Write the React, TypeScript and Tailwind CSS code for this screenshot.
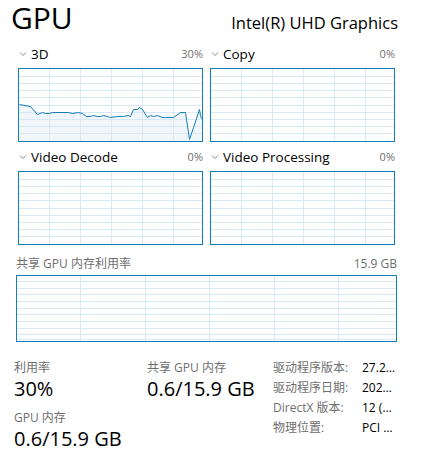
import { ReactNode } from 'react';

// interior coords of the 3D graph (183 x 72)
const load3d: [number, number][] = [
  [0, 35], [11, 37], [18, 45], [23, 43], [26, 44], [30, 44], [33, 43], [49, 43], [53, 44],
  [59, 43], [63, 44], [67, 47], [71, 47], [74, 46], [78, 47], [81, 47], [84, 46], [88, 47],
  [91, 48], [98, 47], [103, 47], [109, 46], [111, 47], [114, 40], [118, 40], [120, 38],
  [123, 40], [128, 48], [131, 46], [134, 47], [138, 46], [143, 48], [146, 48], [154, 48],
  [161, 43], [166, 43], [170, 70], [174, 58], [180, 40], [181, 46], [182, 49],
];

const gridStroke = '#d8e8f4';

type GridProps = { w: number; h: number; xs: number[]; ys: number[]; under?: ReactNode; over?: ReactNode };

const GridSvg = ({ w, h, xs, ys, under, over }: GridProps) => (
  <svg width={w} height={h} viewBox={`0 0 ${w} ${h}`} className="block">
    {under}
    {ys.map((y) => (
      <line key={'h' + y} x1={0} x2={w} y1={y + 0.5} y2={y + 0.5} stroke={gridStroke} strokeWidth={1} />
    ))}
    {xs.map((x) => (
      <line key={'v' + x} x1={x + 0.5} x2={x + 0.5} y1={0} y2={h} stroke={gridStroke} strokeWidth={1} />
    ))}
    {over}
  </svg>
);

const smallXs = [30, 61, 92, 123, 154];
const smallYs = [7, 14, 21, 28, 36, 43, 50, 57, 64];

const Chevron = () => (
  <svg width="8" height="8" viewBox="0 0 8 8" className="ml-[1px] shrink-0">
    <polyline points="1,2.5 4,5.5 7,2.5" fill="none" stroke="#8a8a8a" strokeWidth="1" />
  </svg>
);

type CellProps = { title: string; pct: string; under?: ReactNode; over?: ReactNode };

const Cell = ({ title, pct, under, over }: CellProps) => (
  <div>
    <div className="flex items-center h-[20px]">
      <Chevron />
      <span className="ml-[4px] text-[13.5px] text-black">{title}</span>
      <span className="ml-auto text-[11px] text-[#707070]">{pct}</span>
    </div>
    <div className="mt-[4px] w-[185px] h-[74px] border border-[#117dbb] bg-white">
      <GridSvg w={183} h={72} xs={smallXs} ys={smallYs} under={under} over={over} />
    </div>
  </div>
);

const Stat = ({ label, value, className = '' }: { label: string; value: string; className?: string }) => (
  <div className={className}>
    <div className="text-[12px] leading-[18px] text-[#6e6e6e]">{label}</div>
    <div className="text-[20px] leading-[24px] text-black">{value}</div>
  </div>
);

const infoRows = [
  ['驱动程序版本:', '27.2…'],
  ['驱动程序日期:', '202…'],
  ['DirectX 版本:', '12 (…'],
  ['物理位置:', 'PCI …'],
];

export default function App() {
  const linePts = load3d.map(([x, y]) => `${x + 0.5},${y + 0.5}`).join(' ');
  const fillPts = `0,72 ${linePts} 183,72`;

  return (
    <div className="w-[424px] h-[461px] bg-white overflow-hidden font-['Open_Sans','Noto_Sans_CJK_SC',sans-serif] text-black">
      <div className="flex items-baseline justify-between h-[35px] pl-[11px] pr-[26px] pt-[1px]">
        <div className="text-[30px] leading-[34px]">GPU</div>
        <div className="text-[16.5px] leading-[20px]">Intel(R) UHD Graphics</div>
      </div>

      <div className="ml-[18px] mt-[9px] grid grid-cols-[185px_185px] gap-x-[7px] gap-y-[5px]">
        <Cell
          title="3D"
          pct="30%"
          under={<polygon points={fillPts} fill="#f1f6fa" />}
          over={<polyline points={linePts} fill="none" stroke="#117dbb" strokeWidth={1} />}
        />
        <Cell title="Copy" pct="0%" />
        <Cell title="Video Decode" pct="0%" />
        <Cell title="Video Processing" pct="0%" />
      </div>

      <div className="ml-[16px] w-[381px] mt-[10px]">
        <div className="flex items-center justify-between h-[18px] text-[12px] text-[#6e6e6e]">
          <span>共享 GPU 内存利用率</span>
          <span>15.9 GB</span>
        </div>
        <div className="mt-[2px] h-[67px] border border-[#117dbb]">
          <GridSvg w={379} h={65} xs={[63, 128, 192, 257, 321]} ys={[5, 12, 18, 25, 32, 38, 45, 52, 58, 63]} />
        </div>
      </div>

      <div className="flex mt-[17px]">
        <div className="ml-[14px] w-[133px]">
          <Stat label="利用率" value="30%" />
          <Stat label="GPU 内存" value="0.6/15.9 GB" className="mt-[8px]" />
        </div>
        <div className="w-[126px]">
          <Stat label="共享 GPU 内存" value="0.6/15.9 GB" />
        </div>
        <div className="-mt-[1px]">
          {infoRows.map(([k, v]) => (
            <div key={k} className="flex h-[20px] items-center text-[12px]">
              <span className="w-[89px] text-[#6e6e6e]">{k}</span>
              <span className="text-black">{v}</span>
            </div>
          ))}
        </div>
      </div>
    </div>
  );
}
